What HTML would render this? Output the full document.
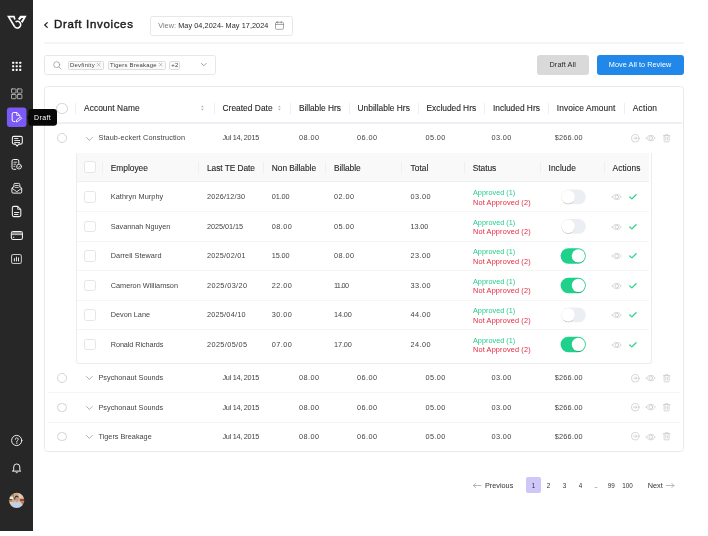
<!DOCTYPE html><html><head><meta charset="utf-8"><title>Draft Invoices</title><style>
*{box-sizing:border-box;margin:0;padding:0}
html,body{width:708px;height:536px;background:#fff;overflow:hidden}
body{font-family:"Liberation Sans",sans-serif;position:relative;color:#3a3a3a;-webkit-font-smoothing:antialiased}
#w{position:absolute;left:0;top:0;width:708px;height:536px;will-change:transform}
.abs{position:absolute}
#side{position:absolute;left:0;top:0;width:33px;height:531px;background:#272727}
#side svg{position:absolute;overflow:visible}
.row{position:absolute;left:0;width:708px;white-space:nowrap}
.t{position:absolute;top:0;white-space:nowrap}
.h{font-size:8.4px;color:#262626;-webkit-text-stroke:0.1px #262626}
.c{font-size:7.3px;color:#444;}
.sep{position:absolute;width:1px;background:#efefef}
.line{position:absolute;height:1px;background:#efefef}
.radio{position:absolute;border:1px solid #d2d2d2;border-radius:50%;background:#fff}
.cb{position:absolute;width:12px;height:11.5px;border:1px solid #e5e5e5;border-radius:2.5px;background:#fff;left:83.5px}
.tg{position:absolute;left:561.5px;width:24.5px;height:14.5px;border-radius:7.5px;background:#e9edf1}
.tg i{position:absolute;left:0.5px;top:0.5px;width:13.5px;height:13.5px;border-radius:50%;background:#fff;box-shadow:0 1px 1.5px rgba(0,0,0,.28)}
.tg.on{background:#1fd18b}
.tg.on i{left:10.5px}
.g{color:#27cd8b}.r{color:#e6283f}
svg{position:absolute;overflow:visible}
</style></head><body><div id="w"><div id="side"><svg style="left:4px;top:12px" width="26" height="20" viewBox="0 0 697 536"><g fill="none" stroke="#fff" stroke-width="44" stroke-linejoin="miter"><path d="M292 200 L268 124 L120 124 L282 390"/><path d="M280 386 A90 90 0 1 0 309 262"/></g><path fill="#fff" d="M374 182 L436 100 L606 100 L496 298 L452 252 L520 160 L474 160 L414 218Z"/></svg><svg style="left:0;top:0" width="33" height="531" viewBox="0 0 33 531" fill="none" stroke="#f4f4f4" stroke-width="0.95" stroke-linecap="round" stroke-linejoin="round"><g fill="#fff" stroke="none"><rect x="12.1" y="61.7" width="2.1" height="2.1" rx="0.6"/><rect x="12.1" y="65.25" width="2.1" height="2.1" rx="0.6"/><rect x="12.1" y="68.8" width="2.1" height="2.1" rx="0.6"/><rect x="15.649999999999999" y="61.7" width="2.1" height="2.1" rx="0.6"/><rect x="15.649999999999999" y="65.25" width="2.1" height="2.1" rx="0.6"/><rect x="15.649999999999999" y="68.8" width="2.1" height="2.1" rx="0.6"/><rect x="19.2" y="61.7" width="2.1" height="2.1" rx="0.6"/><rect x="19.2" y="65.25" width="2.1" height="2.1" rx="0.6"/><rect x="19.2" y="68.8" width="2.1" height="2.1" rx="0.6"/></g><g stroke="#c9c9c9" stroke-width="0.8"><rect x="11.500" y="88.900" width="4.500" height="4.200" rx="0.600"/><rect x="17.400" y="88.900" width="4.500" height="4.200" rx="0.600"/><rect x="11.500" y="94.500" width="4.500" height="4.200" rx="0.600"/><rect x="17.400" y="94.500" width="4.500" height="4.200" rx="0.600"/></g><rect x="6.900" y="107.400" width="19.550" height="19.700" rx="3" fill="#7a59f7" stroke="none"/><g stroke="#fff" stroke-width="1"><path d="M14.800 121.500h-1.100a1.500 1.500 0 0 1-1.500-1.500v-6a1.500 1.500 0 0 1 1.500-1.500h3.300l2.800 3.100v0.600"/><path d="M16.700 112.800v2.600h2.600" stroke-width="0.800"/><path d="M16.300 121.500l0.400-1.700 3.700-2.800 1.300 1.300-3.700 2.900z" fill="#7a59f7" stroke-width="0.900"/></g><path d="M13.850 136.350h6.950a1.500 1.500 0 0 1 1.500 1.500v4.750a1.500 1.500 0 0 1-1.500 1.500h-2.100l-1.600 2.100-1.600-2.100h-1.650a1.500 1.500 0 0 1-1.500-1.500v-4.750a1.500 1.500 0 0 1 1.500-1.500z" stroke-width="1.050"/><path d="M14.600 138.500h3.400M14.700 140.500h5M14.600 142.500h5.100" stroke-width="0.900"/><path d="M15.800 169.300h-2.300a1.500 1.500 0 0 1-1.500-1.500v-6.800a1.500 1.500 0 0 1 1.500-1.500h3.800a1.500 1.500 0 0 1 1.500 1.500v2.400" stroke-width="1"/><path d="M13.900 162.200h3M13.900 164.200h1.800M13.900 166.300h1" stroke-width="0.800"/><circle cx="19.050" cy="166.600" r="2.450" stroke-width="0.900"/><path d="M17.950 166.700l0.800 0.800 1.400-1.600" stroke-width="0.750"/><path d="M13.900 187v-2.500a1.100 1.100 0 0 1 1.100-1.100h3.700a1.100 1.100 0 0 1 1.100 1.100v2.500" stroke-width="0.900"/><path d="M15.300 185.500h3M15.300 187.400h3" stroke-width="0.800"/><path d="M13.800 186.600l-1.900 1.500v3.800a1.200 1.200 0 0 0 1.200 1.200h7.400a1.200 1.200 0 0 0 1.200-1.200v-3.800l-1.900-1.500" stroke-width="1"/><path d="M12.300 188.500l4.500 3.200 4.500-3.200" stroke-width="0.900"/><path d="M13.850 206.350h3.800l3.150 3.200v5.550a1.500 1.500 0 0 1-1.500 1.500h-5.450a1.500 1.500 0 0 1-1.500-1.500v-7.250a1.500 1.500 0 0 1 1.500-1.500z" stroke-width="1.050"/><path d="M17.700 206.700v2.600h2.700" stroke-width="0.800"/><path d="M14.500 212.500h4.300M14.500 214.500h3.500" stroke-width="0.950"/><rect x="11.350" y="231.400" width="11.100" height="8.200" rx="1.900" stroke-width="1.050"/><rect x="11.800" y="232.100" width="10.200" height="2.200" fill="#8d8d8d" stroke="none"/><path d="M11.800 234.600h10.200" stroke-width="0.700" stroke-linecap="butt"/><path d="M13.300 237.300h0.600" stroke-width="0.900"/><rect x="11.550" y="254.400" width="9.800" height="9.150" rx="1.900" stroke="#c6c6c6" stroke-width="1.050"/><path d="M14.400 261v-2.400M16.450 261v-3.900M18.500 261v-3.100" stroke-width="1" stroke="#ececec"/><circle cx="16.700" cy="440.500" r="5.100" stroke-width="0.950"/><path d="M15.300 439.300a1.450 1.450 0 1 1 2.100 1.300c-0.450 0.250-0.650 0.500-0.650 1.050" stroke-width="0.900"/><circle cx="16.750" cy="443.100" r="0.350" fill="#f4f4f4" stroke-width="0.400"/><path d="M13.700 470.300v-3.300a3.050 3.050 0 0 1 6.100 0v3.300l0.950 0.800h-8z" stroke-width="0.950"/><path d="M15.700 472a1.100 1.100 0 0 0 2.100 0" stroke-width="0.850"/></svg><svg style="left:0;top:485px" width="33" height="30" viewBox="0 485 33 30"><defs><clipPath id="av"><circle cx="16.650" cy="500.350" r="7.700"/></clipPath><filter id="ab" x="-20%" y="-20%" width="140%" height="140%"><feGaussianBlur stdDeviation="0.45"/></filter></defs><g clip-path="url(#av)"><g filter="url(#ab)"><rect x="8" y="492" width="18" height="17" fill="#c9ab8e"/><rect x="8" y="492" width="6" height="6" fill="#a98d63"/><rect x="9.500" y="496.500" width="3.500" height="2.600" fill="#efece6"/><rect x="9" y="499" width="3" height="1.600" fill="#4f5a3c"/><rect x="9" y="500.300" width="3" height="1.500" fill="#e08a2a"/><rect x="9" y="502" width="4" height="5" fill="#d9cfc4"/><rect x="18.500" y="493" width="6" height="5" fill="#e2c8b0"/><rect x="20" y="499" width="5" height="2.200" fill="#a3452b"/><rect x="21" y="501.500" width="4" height="3" fill="#b98055"/><ellipse cx="16.700" cy="497" rx="1.900" ry="1.500" fill="#4a382f"/><ellipse cx="15" cy="498.600" rx="0.800" ry="1.400" fill="#4a382f"/><ellipse cx="16.900" cy="498.900" rx="1.700" ry="2" fill="#c99b80"/><path d="M10.800 508.500c0-5 2.500-7.300 6.200-7.300s6 2.300 6 7.300z" fill="#c3d0e3"/><path d="M16 500.800l1 2.200 1-2.200z" fill="#c99b80"/></g></g></svg></div><svg style="left:0;top:0;z-index:5" width="80" height="140" viewBox="0 0 80 140"><path fill="#090909" d="M31.700 109h22.100a3.200 3.200 0 0 1 3.200 3.200v10.400a3.200 3.200 0 0 1-3.200 3.200h-22.100a3.200 3.200 0 0 1-3.200-3.200v-2.600l-1.400-2.500 1.400-2.500v-2.800a3.200 3.200 0 0 1 3.200-3.200z"/></svg><div class="abs" style="z-index:6;left:34px;top:108.900px;height:17px;line-height:17px;font-size:6.900px;color:#fff;letter-spacing:0.45px">Draft</div><svg style="left:44.300px;top:22.300px" width="4" height="6" viewBox="0 0 4 6" fill="none" stroke="#222" stroke-width="1.200" stroke-linecap="round" stroke-linejoin="round"><path d="M3.300 0.600L0.700 3l2.600 2.400"/></svg><div class="abs" style="left:54px;top:14.1px;height:20px;line-height:20px;font-size:11.5px;font-weight:normal;-webkit-text-stroke:0.42px #1c1c1c;color:#1c1c1c;letter-spacing:0.66px;white-space:nowrap">Draft Invoices</div><div class="abs" style="left:150px;top:15.500px;width:143px;height:20px;border:1px solid #e7e7e7;border-radius:2.500px"></div><div class="row" style="top:15.500px;height:20px;line-height:20px;font-size:7.300px"><span class="t " style="left:158.2px;letter-spacing:0.037px;color:#7a7a7a">View:</span><span class="t " style="left:178.2px;letter-spacing:0.06px;color:#2a2a2a">May 04,2024- May 17,2024</span></div><svg style="left:275.200px;top:21.400px" width="9" height="8.800" viewBox="0 0 18 17.600" fill="none" stroke="#6a6a6a" stroke-width="1.150" stroke-linecap="round" stroke-linejoin="round"><rect x="1" y="2.600" width="16" height="14" rx="2"/><path d="M1 7h16M5.500 0.800v3.400M12.500 0.800v3.400"/></svg><div class="line" style="left:44px;top:42px;width:640px;height:2px;background:#f5f5f5"></div><div class="abs" style="left:44px;top:55px;width:172px;height:20px;border:1px solid #e7e7e7;border-radius:2.500px"></div><svg style="left:53px;top:60.800px" width="8.600" height="8.600" viewBox="0 0 17.200 17.200" fill="none" stroke="#8a8a8a" stroke-width="1.300" stroke-linecap="round"><circle cx="7.400" cy="7.400" r="6"/><path d="M12 12l4.200 4.200"/></svg><div class="abs" style="left:68px;top:60.500px;width:35.5px;height:9.200px;border:1px solid #dcdcdc;border-radius:1.500px;background:#fafafa"></div><div class="abs" style="left:70px;top:60.500px;height:9.200px;line-height:9.200px;font-size:5.900px;color:#3c3c3c;letter-spacing:0.25px;white-space:nowrap">Devfinity</div><svg style="left:97.3px;top:63.400px" width="3.400" height="3.400" viewBox="0 0 3.400 3.400" stroke="#999" stroke-width="0.600" stroke-linecap="round"><path d="M0.300 0.300l2.800 2.800M3.100 0.300L0.300 3.100"/></svg><div class="abs" style="left:108px;top:60.500px;width:57.6px;height:9.200px;border:1px solid #dcdcdc;border-radius:1.500px;background:#fafafa"></div><div class="abs" style="left:110px;top:60.500px;height:9.200px;line-height:9.200px;font-size:5.900px;color:#3c3c3c;letter-spacing:0.25px;white-space:nowrap">Tigers Breakage</div><svg style="left:159.4px;top:63.400px" width="3.400" height="3.400" viewBox="0 0 3.400 3.400" stroke="#999" stroke-width="0.600" stroke-linecap="round"><path d="M0.300 0.300l2.800 2.800M3.100 0.300L0.300 3.100"/></svg><div class="abs" style="left:169.3px;top:60.500px;width:10.8px;height:9.200px;border:1px solid #dcdcdc;border-radius:1.500px;background:#fafafa"></div><div class="abs" style="left:171.3px;top:60.500px;height:9.200px;line-height:9.200px;font-size:5.900px;color:#3c3c3c;letter-spacing:0.25px;white-space:nowrap">+2</div><svg style="left:200.500px;top:63.400px" width="5.600" height="3.200" viewBox="0 0 5.600 3.200" fill="none" stroke="#777" stroke-width="0.700" stroke-linecap="round" stroke-linejoin="round"><path d="M0.400 0.400L2.800 2.800 5.200 0.400"/></svg><div class="abs" style="left:537px;top:55px;width:52px;height:19.800px;border-radius:3px;background:#d9d9d9"></div><div class="row" style="top:55px;height:19.800px;line-height:19.800px;font-size:7.300px"><span class="t " style="left:549.5px;letter-spacing:0.099px;color:#2a2a2a">Draft All</span></div><div class="abs" style="left:597px;top:55px;width:87px;height:19.800px;border-radius:3px;background:#2188ea"></div><div class="row" style="top:55px;height:19.800px;line-height:19.800px;font-size:7.300px"><span class="t " style="left:608.8px;letter-spacing:0.055px;color:#fff">Move All to Review</span></div><div class="abs" style="left:44px;top:86px;width:640px;height:366px;border:1px solid #e9e9e9;border-radius:3.500px"></div><div class="radio" style="left:56.250px;top:102.5px;width:11.500px;height:11.500px"></div><div class="sep" style="left:75px;top:103px;height:10.500px"></div><div class="sep" style="left:214px;top:103px;height:10.500px"></div><div class="sep" style="left:290px;top:103px;height:10.500px"></div><div class="sep" style="left:349px;top:103px;height:10.500px"></div><div class="sep" style="left:418px;top:103px;height:10.500px"></div><div class="sep" style="left:484px;top:103px;height:10.500px"></div><div class="sep" style="left:548px;top:103px;height:10.500px"></div><div class="sep" style="left:624px;top:103px;height:10.500px"></div><div class="row h" style="top:97.75px;height:20px;line-height:20px"><span class="t " style="left:84px;letter-spacing:0.06px;">Account Name</span><span class="t " style="left:222.5px;letter-spacing:0.026px;">Created Date</span><span class="t " style="left:299px;letter-spacing:-0.044px;">Billable Hrs</span><span class="t " style="left:357.5px;letter-spacing:0.016px;">Unbillable Hrs</span><span class="t " style="left:426.5px;letter-spacing:-0.018px;">Excluded Hrs</span><span class="t " style="left:493px;letter-spacing:-0.014px;">Included Hrs</span><span class="t " style="left:556.75px;letter-spacing:0.104px;">Invoice Amount</span><span class="t " style="left:632.75px;letter-spacing:0.181px;">Action</span></div><svg style="left:201.1px;top:105.100px" width="2.800" height="6" viewBox="0 0 2.800 6" fill="#b4b4b4"><path d="M0 2.200L1.400 0.400 2.800 2.200zM0 3.800L1.400 5.600 2.800 3.800z"/></svg><svg style="left:277.6px;top:105.100px" width="2.800" height="6" viewBox="0 0 2.800 6" fill="#b4b4b4"><path d="M0 2.200L1.400 0.400 2.800 2.200zM0 3.800L1.400 5.600 2.800 3.800z"/></svg><div class="line" style="left:46px;top:122px;width:636px;height:1.500px;background:#edf1f5"></div><div class="radio" style="left:57.100px;top:133.2px;width:9.800px;height:9.800px"></div><svg style="left:86.300px;top:136.6px" width="6.800" height="4" viewBox="0 0 6.800 4" fill="none" stroke="#8f8f8f" stroke-width="0.700" stroke-linecap="round" stroke-linejoin="round"><path d="M0.500 0.500L3.400 3.400 6.300 0.500"/></svg><div class="row c" style="top:128.1px;height:20px;line-height:20px"><span class="t " style="left:98.5px;letter-spacing:0.088px;">Staub-eckert Construction</span><span class="t " style="left:222.5px;letter-spacing:-0.275px;">Jul 14, 2015</span><span class="t " style="left:299px;letter-spacing:0.433px;">08.00</span><span class="t " style="left:357px;letter-spacing:0.433px;">06.00</span><span class="t " style="left:425.5px;letter-spacing:0.358px;">05.00</span><span class="t " style="left:491.5px;letter-spacing:0.358px;">03.00</span><span class="t " style="left:554.75px;letter-spacing:0.227px;">$266.00</span></div><svg style="left:631px;top:133.9px" width="8.400" height="8.400" viewBox="0 0 16.800 16.800" fill="none" stroke="#b5b5b5" stroke-width="1.100" stroke-linecap="round" stroke-linejoin="round"><circle cx="8.400" cy="8.400" r="7.600"/><path d="M4.800 8.400h7M9.200 5.600l2.800 2.800-2.800 2.800"/></svg><svg style="left:646px;top:135.0px" width="9.600" height="6.200" viewBox="0 0 19.200 12.400" fill="none" stroke="#b5b5b5" stroke-width="1.100" stroke-linecap="round" stroke-linejoin="round"><path d="M0.800 6.200C3 2.400 6 0.800 9.600 0.800s6.600 1.600 8.800 5.400c-2.200 3.800-5.200 5.400-8.800 5.400S3 10 0.800 6.200z"/><circle cx="9.600" cy="6.200" r="3.600"/></svg><svg style="left:663px;top:133.9px" width="7.200" height="8.400" viewBox="0 0 14.400 16.800" fill="none" stroke="#b5b5b5" stroke-width="1.100" stroke-linecap="round" stroke-linejoin="round"><path d="M0.800 3.400h12.800M4.800 3.400V1.400h4.800v2M2.200 3.400v11a1.400 1.400 0 0 0 1.400 1.400h7.200a1.400 1.400 0 0 0 1.400-1.400v-11M5.600 7v5M8.800 7v5"/></svg><div class="abs" style="left:76px;top:153px;width:576px;height:210.600px;border:1px solid #ececec;border-top:none;border-radius:0 0 3.500px 3.500px"></div><div class="abs" style="left:76.500px;top:153px;width:572.500px;height:28px;background:#f9f9f9"></div><div class="line" style="left:76.500px;top:181.200px;width:572.500px;height:1.200px;background:#ecf1f4"></div><div class="cb" style="top:161.300px"></div><div class="sep" style="left:102px;top:162.300px;height:10.500px;background:#efefef"></div><div class="sep" style="left:198.3px;top:162.300px;height:10.500px;background:#efefef"></div><div class="sep" style="left:263px;top:162.300px;height:10.500px;background:#efefef"></div><div class="sep" style="left:325px;top:162.300px;height:10.500px;background:#efefef"></div><div class="sep" style="left:401.3px;top:162.300px;height:10.500px;background:#efefef"></div><div class="sep" style="left:464px;top:162.300px;height:10.500px;background:#efefef"></div><div class="sep" style="left:540px;top:162.300px;height:10.500px;background:#efefef"></div><div class="sep" style="left:604px;top:162.300px;height:10.500px;background:#efefef"></div><div class="row h" style="top:158.100px;height:20px;line-height:20px"><span class="t " style="left:110.75px;letter-spacing:-0.015px;">Employee</span><span class="t " style="left:207px;letter-spacing:-0.07px;">Last TE Date</span><span class="t " style="left:271.75px;letter-spacing:-0.03px;">Non Billable</span><span class="t " style="left:334px;letter-spacing:-0.048px;">Billable</span><span class="t " style="left:410.5px;letter-spacing:0.019px;">Total</span><span class="t " style="left:472.75px;letter-spacing:-0.063px;">Status</span><span class="t " style="left:548.5px;letter-spacing:0.069px;">Include</span><span class="t " style="left:612.5px;letter-spacing:0.076px;">Actions</span></div><div class="cb" style="top:191.0px"></div><div class="row c" style="top:187.1px;height:20px;line-height:20px"><span class="t " style="left:110.75px;letter-spacing:0.075px;">Kathryn Murphy</span><span class="t " style="left:207px;letter-spacing:0.163px;">2026/12/30</span><span class="t " style="left:271.75px;letter-spacing:-0.117px;">01.00</span><span class="t " style="left:334px;letter-spacing:0.433px;">02.00</span><span class="t " style="left:410.5px;letter-spacing:0.433px;">03.00</span></div><div class="row c" style="top:188.1px;height:9.300px;line-height:9.300px"><span class="t g" style="left:473px;letter-spacing:0.005px;">Approved (1)</span></div><div class="row c" style="top:197.6px;height:9.300px;line-height:9.300px"><span class="t r" style="left:473px;letter-spacing:0.161px;">Not Approved (2)</span></div><svg style="left:612.200px;top:194.0px" width="9.600" height="6" viewBox="0 0 19.200 12" fill="none" stroke="#b9b9b9" stroke-width="1.100" stroke-linecap="round" stroke-linejoin="round"><path d="M0.800 6C3 2.300 6 0.800 9.600 0.800s6.600 1.500 8.800 5.200c-2.200 3.700-5.200 5.200-8.800 5.200S3 9.700 0.800 6z"/><circle cx="9.600" cy="6" r="3.500"/></svg><svg style="left:628.800px;top:194.1px" width="7.800" height="5.600" viewBox="0 0 7.800 5.600" fill="none" stroke="#2bd48b" stroke-width="1.250" stroke-linecap="round" stroke-linejoin="round"><path d="M0.700 3L2.900 4.900 7.100 0.700"/></svg><div class="line" style="left:76.500px;top:211.0px;width:572.500px;background:#f6f6f6"></div><div class="cb" style="top:220.5px"></div><div class="row c" style="top:216.6px;height:20px;line-height:20px"><span class="t " style="left:110.75px;letter-spacing:-0.041px;">Savannah Nguyen</span><span class="t " style="left:207px;letter-spacing:-0.06px;">2025/01/15</span><span class="t " style="left:271.75px;letter-spacing:0.433px;">08.00</span><span class="t " style="left:334px;letter-spacing:0.433px;">05.00</span><span class="t " style="left:410.5px;letter-spacing:-0.117px;">13.00</span></div><div class="row c" style="top:217.6px;height:9.300px;line-height:9.300px"><span class="t g" style="left:473px;letter-spacing:0.005px;">Approved (1)</span></div><div class="row c" style="top:227.1px;height:9.300px;line-height:9.300px"><span class="t r" style="left:473px;letter-spacing:0.161px;">Not Approved (2)</span></div><svg style="left:612.200px;top:223.5px" width="9.600" height="6" viewBox="0 0 19.200 12" fill="none" stroke="#b9b9b9" stroke-width="1.100" stroke-linecap="round" stroke-linejoin="round"><path d="M0.800 6C3 2.300 6 0.800 9.600 0.800s6.600 1.500 8.800 5.200c-2.200 3.700-5.200 5.200-8.800 5.200S3 9.700 0.800 6z"/><circle cx="9.600" cy="6" r="3.500"/></svg><svg style="left:628.800px;top:223.6px" width="7.800" height="5.600" viewBox="0 0 7.800 5.600" fill="none" stroke="#2bd48b" stroke-width="1.250" stroke-linecap="round" stroke-linejoin="round"><path d="M0.700 3L2.900 4.900 7.100 0.700"/></svg><div class="line" style="left:76.500px;top:240.5px;width:572.500px;background:#f6f6f6"></div><div class="cb" style="top:250.0px"></div><div class="row c" style="top:246.1px;height:20px;line-height:20px"><span class="t " style="left:110.75px;letter-spacing:0.032px;">Darrell Steward</span><span class="t " style="left:207px;letter-spacing:0.218px;">2025/02/01</span><span class="t " style="left:271.75px;letter-spacing:-0.117px;">15.00</span><span class="t " style="left:334px;letter-spacing:0.433px;">08.00</span><span class="t " style="left:410.5px;letter-spacing:0.433px;">23.00</span></div><div class="row c" style="top:247.1px;height:9.300px;line-height:9.300px"><span class="t g" style="left:473px;letter-spacing:0.005px;">Approved (1)</span></div><div class="row c" style="top:256.6px;height:9.300px;line-height:9.300px"><span class="t r" style="left:473px;letter-spacing:0.161px;">Not Approved (2)</span></div><svg style="left:612.200px;top:253.0px" width="9.600" height="6" viewBox="0 0 19.200 12" fill="none" stroke="#b9b9b9" stroke-width="1.100" stroke-linecap="round" stroke-linejoin="round"><path d="M0.800 6C3 2.300 6 0.800 9.600 0.800s6.600 1.500 8.800 5.200c-2.200 3.700-5.200 5.200-8.800 5.200S3 9.700 0.800 6z"/><circle cx="9.600" cy="6" r="3.500"/></svg><svg style="left:628.800px;top:253.1px" width="7.800" height="5.600" viewBox="0 0 7.800 5.600" fill="none" stroke="#2bd48b" stroke-width="1.250" stroke-linecap="round" stroke-linejoin="round"><path d="M0.700 3L2.900 4.900 7.100 0.700"/></svg><div class="line" style="left:76.500px;top:270.0px;width:572.500px;background:#f6f6f6"></div><div class="cb" style="top:279.5px"></div><div class="row c" style="top:275.6px;height:20px;line-height:20px"><span class="t " style="left:110.75px;letter-spacing:-0.005px;">Cameron Williamson</span><span class="t " style="left:207px;letter-spacing:0.385px;">2025/03/20</span><span class="t " style="left:271.75px;letter-spacing:0.433px;">22.00</span><span class="t " style="left:334px;letter-spacing:-0.667px;">11.00</span><span class="t " style="left:410.5px;letter-spacing:0.433px;">33.00</span></div><div class="row c" style="top:276.6px;height:9.300px;line-height:9.300px"><span class="t g" style="left:473px;letter-spacing:0.005px;">Approved (1)</span></div><div class="row c" style="top:286.1px;height:9.300px;line-height:9.300px"><span class="t r" style="left:473px;letter-spacing:0.161px;">Not Approved (2)</span></div><svg style="left:612.200px;top:282.5px" width="9.600" height="6" viewBox="0 0 19.200 12" fill="none" stroke="#b9b9b9" stroke-width="1.100" stroke-linecap="round" stroke-linejoin="round"><path d="M0.800 6C3 2.300 6 0.800 9.600 0.800s6.600 1.500 8.800 5.200c-2.200 3.700-5.200 5.200-8.800 5.200S3 9.700 0.800 6z"/><circle cx="9.600" cy="6" r="3.500"/></svg><svg style="left:628.800px;top:282.6px" width="7.800" height="5.600" viewBox="0 0 7.800 5.600" fill="none" stroke="#2bd48b" stroke-width="1.250" stroke-linecap="round" stroke-linejoin="round"><path d="M0.700 3L2.900 4.900 7.100 0.700"/></svg><div class="line" style="left:76.500px;top:299.5px;width:572.500px;background:#f6f6f6"></div><div class="cb" style="top:309.0px"></div><div class="row c" style="top:305.1px;height:20px;line-height:20px"><span class="t " style="left:110.75px;letter-spacing:-0.013px;">Devon Lane</span><span class="t " style="left:207px;letter-spacing:0.218px;">2025/04/10</span><span class="t " style="left:271.75px;letter-spacing:0.433px;">30.00</span><span class="t " style="left:334px;letter-spacing:-0.117px;">14.00</span><span class="t " style="left:410.5px;letter-spacing:0.433px;">44.00</span></div><div class="row c" style="top:306.1px;height:9.300px;line-height:9.300px"><span class="t g" style="left:473px;letter-spacing:0.005px;">Approved (1)</span></div><div class="row c" style="top:315.6px;height:9.300px;line-height:9.300px"><span class="t r" style="left:473px;letter-spacing:0.161px;">Not Approved (2)</span></div><svg style="left:612.200px;top:312.0px" width="9.600" height="6" viewBox="0 0 19.200 12" fill="none" stroke="#b9b9b9" stroke-width="1.100" stroke-linecap="round" stroke-linejoin="round"><path d="M0.800 6C3 2.300 6 0.800 9.600 0.800s6.600 1.500 8.800 5.200c-2.200 3.700-5.200 5.200-8.800 5.200S3 9.700 0.800 6z"/><circle cx="9.600" cy="6" r="3.500"/></svg><svg style="left:628.800px;top:312.1px" width="7.800" height="5.600" viewBox="0 0 7.800 5.600" fill="none" stroke="#2bd48b" stroke-width="1.250" stroke-linecap="round" stroke-linejoin="round"><path d="M0.700 3L2.900 4.900 7.100 0.700"/></svg><div class="line" style="left:76.500px;top:329.0px;width:572.500px;background:#f6f6f6"></div><div class="cb" style="top:338.5px"></div><div class="row c" style="top:334.6px;height:20px;line-height:20px"><span class="t " style="left:110.75px;letter-spacing:-0.098px;">Ronald Richards</span><span class="t " style="left:207px;letter-spacing:0.385px;">2025/05/05</span><span class="t " style="left:271.75px;letter-spacing:0.433px;">07.00</span><span class="t " style="left:334px;letter-spacing:-0.117px;">17.00</span><span class="t " style="left:410.5px;letter-spacing:0.433px;">24.00</span></div><div class="row c" style="top:335.6px;height:9.300px;line-height:9.300px"><span class="t g" style="left:473px;letter-spacing:0.005px;">Approved (1)</span></div><div class="row c" style="top:345.1px;height:9.300px;line-height:9.300px"><span class="t r" style="left:473px;letter-spacing:0.161px;">Not Approved (2)</span></div><svg style="left:612.200px;top:341.5px" width="9.600" height="6" viewBox="0 0 19.200 12" fill="none" stroke="#b9b9b9" stroke-width="1.100" stroke-linecap="round" stroke-linejoin="round"><path d="M0.800 6C3 2.300 6 0.800 9.600 0.800s6.600 1.500 8.800 5.200c-2.200 3.700-5.200 5.200-8.800 5.200S3 9.700 0.800 6z"/><circle cx="9.600" cy="6" r="3.500"/></svg><svg style="left:628.800px;top:341.6px" width="7.800" height="5.600" viewBox="0 0 7.800 5.600" fill="none" stroke="#2bd48b" stroke-width="1.250" stroke-linecap="round" stroke-linejoin="round"><path d="M0.700 3L2.900 4.900 7.100 0.700"/></svg><svg style="left:0;top:0" width="708" height="536" viewBox="0 0 708 536"><defs><filter id="sh" x="-30%" y="-30%" width="160%" height="170%"><feGaussianBlur stdDeviation="0.7"/></filter></defs><rect x="561.200" y="189.55" width="24.600" height="14.800" rx="7.400" fill="#ebeef2"/><circle cx="568.200" cy="197.75" r="6.500" fill="#000" opacity="0.28" filter="url(#sh)"/><circle cx="568.200" cy="196.95" r="6.800" fill="#fff"/><rect x="561.200" y="219.05" width="24.600" height="14.800" rx="7.400" fill="#ebeef2"/><circle cx="568.200" cy="227.25" r="6.500" fill="#000" opacity="0.28" filter="url(#sh)"/><circle cx="568.200" cy="226.45" r="6.800" fill="#fff"/><rect x="560.600" y="248.20" width="25.200" height="15.500" rx="7.750" fill="#1fd18b"/><circle cx="578.400" cy="256.65" r="6.500" fill="#000" opacity="0.25" filter="url(#sh)"/><circle cx="578.400" cy="255.95" r="6.650" fill="#fff"/><rect x="560.600" y="277.70" width="25.200" height="15.500" rx="7.750" fill="#1fd18b"/><circle cx="578.400" cy="286.15" r="6.500" fill="#000" opacity="0.25" filter="url(#sh)"/><circle cx="578.400" cy="285.45" r="6.650" fill="#fff"/><rect x="561.200" y="307.55" width="24.600" height="14.800" rx="7.400" fill="#ebeef2"/><circle cx="568.200" cy="315.75" r="6.500" fill="#000" opacity="0.28" filter="url(#sh)"/><circle cx="568.200" cy="314.95" r="6.800" fill="#fff"/><rect x="560.600" y="336.70" width="25.200" height="15.500" rx="7.750" fill="#1fd18b"/><circle cx="578.400" cy="345.15" r="6.500" fill="#000" opacity="0.25" filter="url(#sh)"/><circle cx="578.400" cy="344.45" r="6.650" fill="#fff"/></svg><div class="radio" style="left:57.100px;top:372.90000000000003px;width:9.800px;height:9.800px"></div><svg style="left:86.300px;top:376.3px" width="6.800" height="4" viewBox="0 0 6.800 4" fill="none" stroke="#8f8f8f" stroke-width="0.700" stroke-linecap="round" stroke-linejoin="round"><path d="M0.500 0.500L3.400 3.400 6.300 0.500"/></svg><div class="row c" style="top:367.8px;height:20px;line-height:20px"><span class="t " style="left:98.5px;letter-spacing:-0.011px;">Psychonaut Sounds</span><span class="t " style="left:222.5px;letter-spacing:-0.275px;">Jul 14, 2015</span><span class="t " style="left:299px;letter-spacing:0.433px;">08.00</span><span class="t " style="left:357px;letter-spacing:0.433px;">06.00</span><span class="t " style="left:425.5px;letter-spacing:0.358px;">05.00</span><span class="t " style="left:491.5px;letter-spacing:0.358px;">03.00</span><span class="t " style="left:554.75px;letter-spacing:0.227px;">$266.00</span></div><svg style="left:631px;top:373.6px" width="8.400" height="8.400" viewBox="0 0 16.800 16.800" fill="none" stroke="#b5b5b5" stroke-width="1.100" stroke-linecap="round" stroke-linejoin="round"><circle cx="8.400" cy="8.400" r="7.600"/><path d="M4.800 8.400h7M9.200 5.600l2.800 2.800-2.800 2.800"/></svg><svg style="left:646px;top:374.7px" width="9.600" height="6.200" viewBox="0 0 19.200 12.400" fill="none" stroke="#b5b5b5" stroke-width="1.100" stroke-linecap="round" stroke-linejoin="round"><path d="M0.800 6.200C3 2.400 6 0.800 9.600 0.800s6.600 1.600 8.800 5.400c-2.200 3.800-5.200 5.400-8.800 5.400S3 10 0.800 6.200z"/><circle cx="9.600" cy="6.200" r="3.600"/></svg><svg style="left:663px;top:373.6px" width="7.200" height="8.400" viewBox="0 0 14.400 16.800" fill="none" stroke="#b5b5b5" stroke-width="1.100" stroke-linecap="round" stroke-linejoin="round"><path d="M0.800 3.400h12.800M4.800 3.400V1.400h4.800v2M2.200 3.400v11a1.400 1.400 0 0 0 1.400 1.400h7.200a1.400 1.400 0 0 0 1.400-1.400v-11M5.600 7v5M8.800 7v5"/></svg><div class="radio" style="left:57.100px;top:402.6px;width:9.800px;height:9.800px"></div><svg style="left:86.300px;top:406.0px" width="6.800" height="4" viewBox="0 0 6.800 4" fill="none" stroke="#8f8f8f" stroke-width="0.700" stroke-linecap="round" stroke-linejoin="round"><path d="M0.500 0.500L3.400 3.400 6.300 0.500"/></svg><div class="row c" style="top:397.5px;height:20px;line-height:20px"><span class="t " style="left:98.5px;letter-spacing:-0.011px;">Psychonaut Sounds</span><span class="t " style="left:222.5px;letter-spacing:-0.275px;">Jul 14, 2015</span><span class="t " style="left:299px;letter-spacing:0.433px;">08.00</span><span class="t " style="left:357px;letter-spacing:0.433px;">06.00</span><span class="t " style="left:425.5px;letter-spacing:0.358px;">05.00</span><span class="t " style="left:491.5px;letter-spacing:0.358px;">03.00</span><span class="t " style="left:554.75px;letter-spacing:0.227px;">$266.00</span></div><svg style="left:631px;top:403.3px" width="8.400" height="8.400" viewBox="0 0 16.800 16.800" fill="none" stroke="#b5b5b5" stroke-width="1.100" stroke-linecap="round" stroke-linejoin="round"><circle cx="8.400" cy="8.400" r="7.600"/><path d="M4.800 8.400h7M9.200 5.600l2.800 2.800-2.800 2.800"/></svg><svg style="left:646px;top:404.4px" width="9.600" height="6.200" viewBox="0 0 19.200 12.400" fill="none" stroke="#b5b5b5" stroke-width="1.100" stroke-linecap="round" stroke-linejoin="round"><path d="M0.800 6.200C3 2.400 6 0.800 9.600 0.800s6.600 1.600 8.800 5.400c-2.200 3.800-5.200 5.400-8.800 5.400S3 10 0.800 6.200z"/><circle cx="9.600" cy="6.200" r="3.600"/></svg><svg style="left:663px;top:403.3px" width="7.200" height="8.400" viewBox="0 0 14.400 16.800" fill="none" stroke="#b5b5b5" stroke-width="1.100" stroke-linecap="round" stroke-linejoin="round"><path d="M0.800 3.400h12.800M4.800 3.400V1.400h4.800v2M2.200 3.400v11a1.400 1.400 0 0 0 1.400 1.400h7.200a1.400 1.400 0 0 0 1.400-1.400v-11M5.600 7v5M8.800 7v5"/></svg><div class="radio" style="left:57.100px;top:431.70000000000005px;width:9.800px;height:9.800px"></div><svg style="left:86.300px;top:435.1px" width="6.800" height="4" viewBox="0 0 6.800 4" fill="none" stroke="#8f8f8f" stroke-width="0.700" stroke-linecap="round" stroke-linejoin="round"><path d="M0.500 0.500L3.400 3.400 6.300 0.500"/></svg><div class="row c" style="top:426.6px;height:20px;line-height:20px"><span class="t " style="left:98.5px;letter-spacing:-0.004px;">Tigers Breakage</span><span class="t " style="left:222.5px;letter-spacing:-0.275px;">Jul 14, 2015</span><span class="t " style="left:299px;letter-spacing:0.433px;">08.00</span><span class="t " style="left:357px;letter-spacing:0.433px;">06.00</span><span class="t " style="left:425.5px;letter-spacing:0.358px;">05.00</span><span class="t " style="left:491.5px;letter-spacing:0.358px;">03.00</span><span class="t " style="left:554.75px;letter-spacing:0.227px;">$266.00</span></div><svg style="left:631px;top:432.40000000000003px" width="8.400" height="8.400" viewBox="0 0 16.800 16.800" fill="none" stroke="#b5b5b5" stroke-width="1.100" stroke-linecap="round" stroke-linejoin="round"><circle cx="8.400" cy="8.400" r="7.600"/><path d="M4.800 8.400h7M9.200 5.600l2.800 2.800-2.800 2.800"/></svg><svg style="left:646px;top:433.5px" width="9.600" height="6.200" viewBox="0 0 19.200 12.400" fill="none" stroke="#b5b5b5" stroke-width="1.100" stroke-linecap="round" stroke-linejoin="round"><path d="M0.800 6.200C3 2.400 6 0.800 9.600 0.800s6.600 1.600 8.800 5.400c-2.200 3.800-5.200 5.400-8.800 5.400S3 10 0.800 6.200z"/><circle cx="9.600" cy="6.200" r="3.600"/></svg><svg style="left:663px;top:432.40000000000003px" width="7.200" height="8.400" viewBox="0 0 14.400 16.800" fill="none" stroke="#b5b5b5" stroke-width="1.100" stroke-linecap="round" stroke-linejoin="round"><path d="M0.800 3.400h12.800M4.800 3.400V1.400h4.800v2M2.200 3.400v11a1.400 1.400 0 0 0 1.400 1.400h7.200a1.400 1.400 0 0 0 1.400-1.400v-11M5.600 7v5M8.800 7v5"/></svg><div class="line" style="left:48px;top:392px;width:632px;background:#f5f5f5"></div><div class="line" style="left:48px;top:421.5px;width:632px;background:#f5f5f5"></div><svg style="left:473.300px;top:482.900px" width="8.400" height="5" viewBox="0 0 8.400 5" fill="none" stroke="#999" stroke-width="0.700" stroke-linecap="round" stroke-linejoin="round"><path d="M8 2.500H0.500M2.600 0.400L0.500 2.500l2.100 2.100"/></svg><svg style="left:666.300px;top:482.900px" width="8.400" height="5" viewBox="0 0 8.400 5" fill="none" stroke="#999" stroke-width="0.700" stroke-linecap="round" stroke-linejoin="round"><path d="M0.400 2.500h7.500M5.800 0.400l2.100 2.100-2.100 2.100"/></svg><div class="abs" style="left:525.500px;top:477.300px;width:15.800px;height:15.800px;border-radius:2px;background:#cfc6fa"></div><div class="row c" style="top:475.600px;height:20px;line-height:20px;color:#333"><span class="t " style="left:484.9px;letter-spacing:-0.0px;">Previous</span><span class="t " style="left:647.7px;letter-spacing:0.03px;">Next</span></div><div class="row" style="top:475.500px;height:20px;line-height:20px;font-size:6.300px;color:#333"><span class="t" style="left:523.4px;width:20px;text-align:center">1</span><span class="t" style="left:538.6px;width:20px;text-align:center">2</span><span class="t" style="left:554.4px;width:20px;text-align:center">3</span><span class="t" style="left:570.5px;width:20px;text-align:center">4</span><span class="t" style="left:585.9px;width:20px;text-align:center">..</span><span class="t" style="left:601.3px;width:20px;text-align:center">99</span><span class="t" style="left:617.4px;width:20px;text-align:center">100</span></div></div></body></html>
